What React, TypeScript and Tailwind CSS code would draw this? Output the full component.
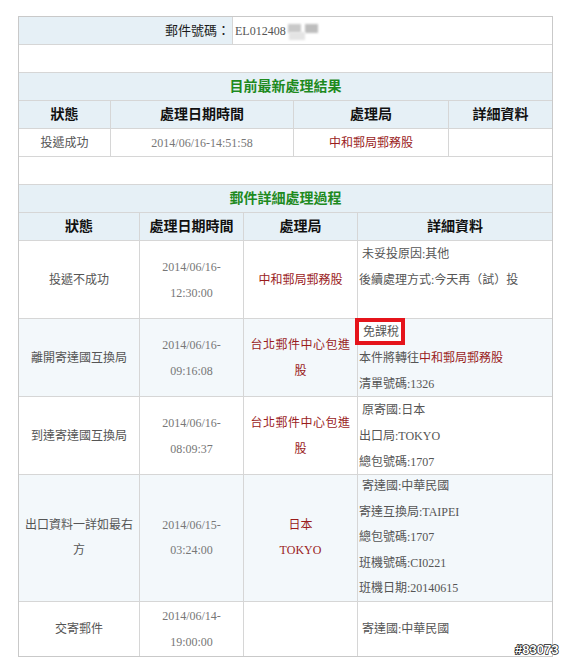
import React from "react";

const F = "font-['Liberation_Serif','Noto_Sans_CJK_TC',serif]";

const Red = ({ children }: { children: React.ReactNode }) => (
  <span className="text-[#9a1c1c]">{children}</span>
);

export default function App() {
  return (
    <div className={`relative w-[563px] h-[658px] overflow-hidden bg-white pt-[16px] pl-[18px] ${F} text-[12px]`}>
      <div className="w-[535px] border border-[#c9c9c9]">
        {/* Mail number row */}
        <div className="flex h-[28px] border-b border-[#d6d6d6]">
          <div className="w-[214px] border-r border-[#d6d6d6] bg-[#e6f0f6] flex items-center justify-end pr-[2px] text-[13px] text-[#1a1a1a]">
            郵件號碼：
          </div>
          <div className="flex-1 flex items-center pl-[2px] text-[#555]">
            <span>EL012408</span>
            <span className="relative ml-[2px] inline-block w-[34px] h-[20px]">
              <span className="absolute left-[0px] top-[3px] w-[13px] h-[9px] bg-[#c9c9c9] blur-[1px]" />
              <span className="absolute left-[17px] top-[3px] w-[13px] h-[9px] bg-[#bdbdbd] blur-[1px]" />
              <span className="absolute left-[1px] top-[11px] w-[16px] h-[8px] bg-[#e4e4e4] blur-[1px]" />
            </span>
          </div>
        </div>
        {/* empty */}
        <div className="h-[28px] border-b border-[#d6d6d6]" />
        {/* title */}
        <div className="h-[28px] border-b border-[#d6d6d6] bg-[#e6f0f6] flex items-center justify-center text-[14px] font-bold text-[#1e8a1e]">
          目前最新處理結果
        </div>
        {/* header */}
        <div className="flex h-[28px] border-b border-[#d6d6d6] bg-[#e6f0f6] text-[14px] font-bold text-[#111]">
          <div className="w-[92px] border-r border-[#d6d6d6] flex items-center justify-center">狀態</div>
          <div className="w-[183px] border-r border-[#d6d6d6] flex items-center justify-center">處理日期時間</div>
          <div className="w-[155px] border-r border-[#d6d6d6] flex items-center justify-center">處理局</div>
          <div className="flex-1 flex items-center justify-center">詳細資料</div>
        </div>
        {/* data */}
        <div className="flex h-[28px] border-b border-[#d6d6d6]">
          <div className="w-[92px] border-r border-[#d6d6d6] flex items-center justify-center text-[#555]">投遞成功</div>
          <div className="w-[183px] border-r border-[#d6d6d6] flex items-center justify-center text-[#777]">2014/06/16-14:51:58</div>
          <div className="w-[155px] border-r border-[#d6d6d6] flex items-center justify-center"><Red>中和郵局郵務股</Red></div>
          <div className="flex-1" />
        </div>
        {/* empty */}
        <div className="h-[28px] border-b border-[#d6d6d6]" />
        {/* title 2 */}
        <div className="h-[28px] border-b border-[#d6d6d6] bg-[#e6f0f6] flex items-center justify-center text-[14px] font-bold text-[#1e8a1e]">
          郵件詳細處理過程
        </div>
        {/* header 2 */}
        <div className="flex h-[28px] border-b border-[#d6d6d6] bg-[#e6f0f6] text-[14px] font-bold text-[#111]">
          <div className="w-[121px] border-r border-[#d6d6d6] flex items-center justify-center">狀態</div>
          <div className="w-[104px] border-r border-[#d6d6d6] flex items-center justify-center">處理日期時間</div>
          <div className="w-[114px] border-r border-[#d6d6d6] flex items-center justify-center">處理局</div>
          <div className="flex-1 flex items-center justify-center">詳細資料</div>
        </div>

        {/* row 1 */}
        <div className="flex h-[78px] border-b border-[#d6d6d6] leading-[26px]">
          <div className="w-[121px] border-r border-[#d6d6d6] flex items-center justify-center text-[#555]">投遞不成功</div>
          <div className="w-[104px] border-r border-[#d6d6d6] flex flex-col items-center justify-center text-[#777]">
            <div>2014/06/16-</div>
            <div>12:30:00</div>
          </div>
          <div className="w-[114px] border-r border-[#d6d6d6] flex items-center justify-center"><Red>中和郵局郵務股</Red></div>
          <div className="flex-1 flex flex-col justify-center pl-[1px] text-[#555]">
            <div className="pl-[3px]">未妥投原因:其他</div>
            <div>後續處理方式:今天再（試）投</div>
            <div className="h-[26px]" />
          </div>
        </div>

        {/* row 2 */}
        <div className="flex h-[78px] border-b border-[#d6d6d6] bg-[#f3f8fb] leading-[26px]">
          <div className="w-[121px] border-r border-[#d6d6d6] flex items-center justify-center text-[#555]">離開寄達國互換局</div>
          <div className="w-[104px] border-r border-[#d6d6d6] flex flex-col items-center justify-center text-[#777]">
            <div>2014/06/16-</div>
            <div>09:16:08</div>
          </div>
          <div className="w-[114px] border-r border-[#d6d6d6] flex flex-col items-center justify-center text-center">
            <Red><span className="tracking-[0.5px]">台北郵件中心包進</span></Red>
            <Red>股</Red>
          </div>
          <div className="flex-1 flex flex-col justify-center pl-[1px] text-[#555]">
            <div className="relative pl-[4px]">
              <span className="absolute left-[-4px] top-[-1px] w-[50px] h-[27px] border-[4px] border-[#e5141b] bg-white" />
              <span className="relative">免課稅</span>
            </div>
            <div>本件將轉往<Red>中和郵局郵務股</Red></div>
            <div>清單號碼:1326</div>
          </div>
        </div>

        {/* row 3 */}
        <div className="flex h-[78px] border-b border-[#d6d6d6] leading-[26px]">
          <div className="w-[121px] border-r border-[#d6d6d6] flex items-center justify-center text-[#555]">到達寄達國互換局</div>
          <div className="w-[104px] border-r border-[#d6d6d6] flex flex-col items-center justify-center text-[#777]">
            <div>2014/06/16-</div>
            <div>08:09:37</div>
          </div>
          <div className="w-[114px] border-r border-[#d6d6d6] flex flex-col items-center justify-center text-center">
            <Red><span className="tracking-[0.5px]">台北郵件中心包進</span></Red>
            <Red>股</Red>
          </div>
          <div className="flex-1 flex flex-col justify-center pl-[1px] text-[#555]">
            <div className="pl-[3px]">原寄國:日本</div>
            <div>出口局:TOKYO</div>
            <div>總包號碼:1707</div>
          </div>
        </div>

        {/* row 4 */}
        <div className="flex h-[127px] border-b border-[#d6d6d6] bg-[#f3f8fb] leading-[25.4px]">
          <div className="w-[121px] border-r border-[#d6d6d6] flex flex-col items-center justify-center text-[#555]">
            <div>出口資料一詳如最右</div>
            <div>方</div>
          </div>
          <div className="w-[104px] border-r border-[#d6d6d6] flex flex-col items-center justify-center text-[#777]">
            <div>2014/06/15-</div>
            <div>03:24:00</div>
          </div>
          <div className="w-[114px] border-r border-[#d6d6d6] flex flex-col items-center justify-center">
            <Red>日本</Red>
            <Red>TOKYO</Red>
          </div>
          <div className="flex-1 flex flex-col justify-center pl-[1px] text-[#555]">
            <div className="pl-[3px]">寄達國:中華民國</div>
            <div>寄達互換局:TAIPEI</div>
            <div>總包號碼:1707</div>
            <div>班機號碼:CI0221</div>
            <div>班機日期:20140615</div>
          </div>
        </div>

        {/* row 5 */}
        <div className="flex h-[54px] leading-[26px]">
          <div className="w-[121px] border-r border-[#d6d6d6] flex items-center justify-center text-[#555]">交寄郵件</div>
          <div className="w-[104px] border-r border-[#d6d6d6] flex flex-col items-center justify-center text-[#777]">
            <div>2014/06/14-</div>
            <div>19:00:00</div>
          </div>
          <div className="w-[114px] border-r border-[#d6d6d6]" />
          <div className="flex-1 flex flex-col justify-center pl-[1px] text-[#555]">
            <div className="pl-[3px]">寄達國:中華民國</div>
          </div>
        </div>
      </div>

      <div className="absolute left-[515px] top-[643px] font-['Liberation_Sans',sans-serif] text-[13px] font-bold leading-none text-white [-webkit-text-stroke:1.4px_#111] [paint-order:stroke_fill]">
        #83073
      </div>
    </div>
  );
}
